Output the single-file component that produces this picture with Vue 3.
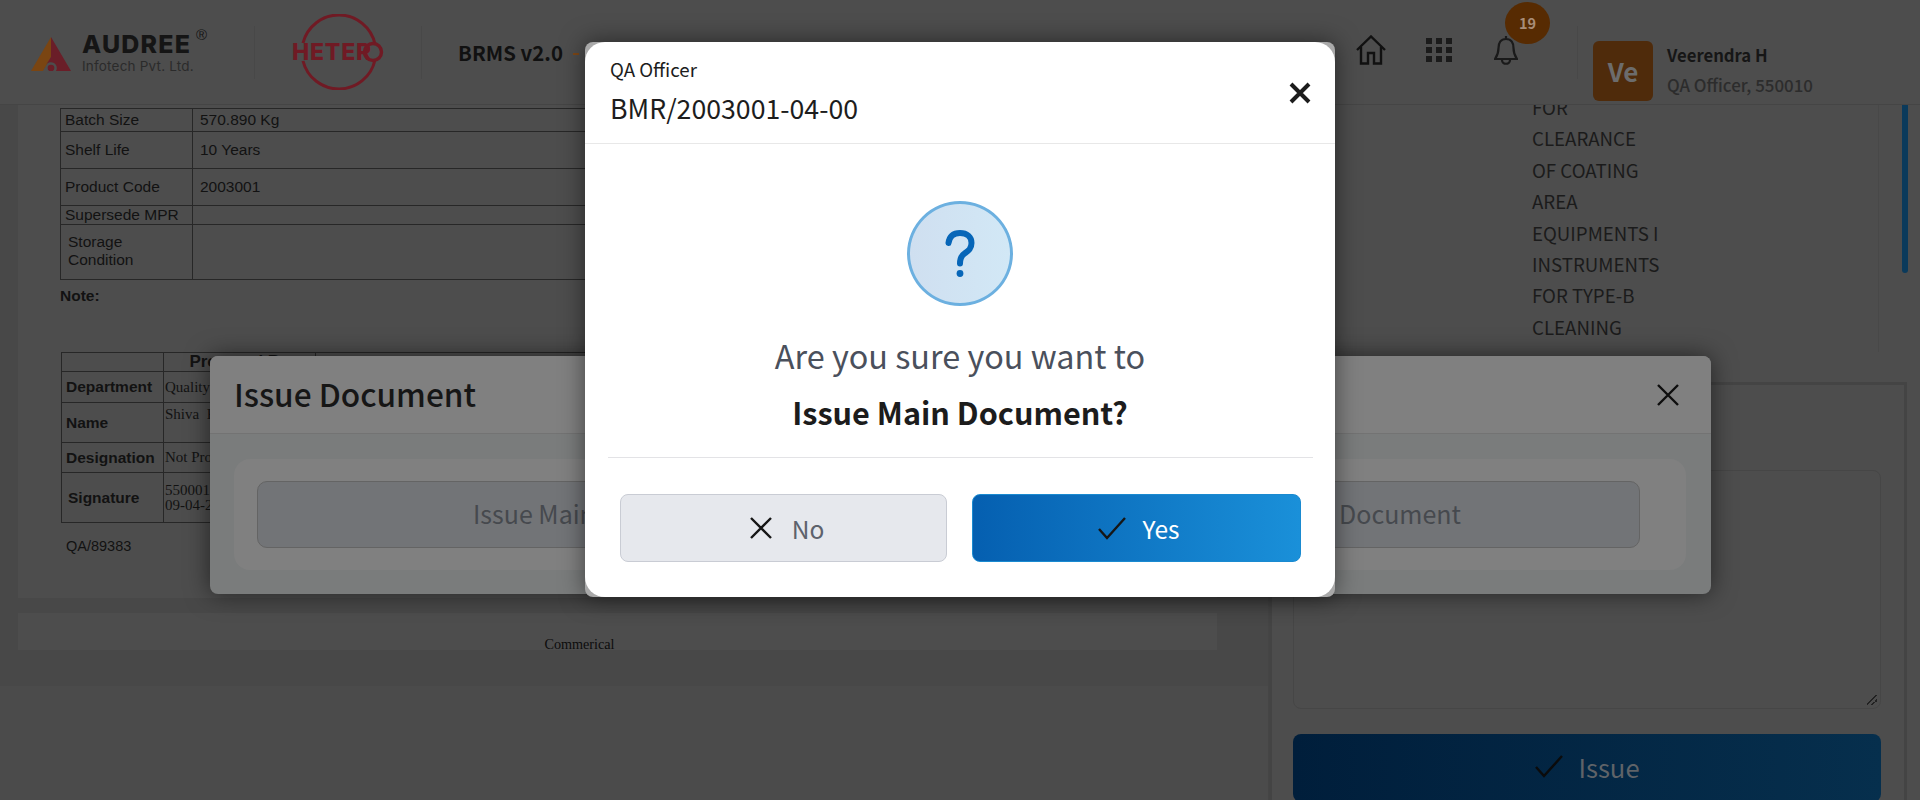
<template>
  <div class="screen">
    <header class="topbar">
      <div class="brand">
        <svg class="audree-mark" width="40" height="34" viewBox="0 0 40 34">
          <path d="M20 0 L0 34 H12 L20 20 Z" fill="#7a4512" />
          <path d="M20 0 L40 34 H25 A5 5 0 0 0 15 28 L20 20 Z" fill="#6a1e28" />
          <circle cx="20" cy="31" r="3.3" fill="#6a1e28" />
        </svg>
        <div class="audree-text">
          <div class="audree-name">AUDREE<span class="reg">®</span></div>
          <div class="audree-sub">Infotech Pvt. Ltd.</div>
        </div>
      </div>
      <div class="hetero">
        <svg class="hetero-ring" width="90" height="76" viewBox="0 0 90 76">
          <path d="M9 29 A37 37 0 0 1 81 30 M81 46 A37 37 0 0 1 9 47" fill="none" stroke="#701a24" stroke-width="3" />
          <circle cx="79" cy="38" r="8.5" fill="none" stroke="#701a24" stroke-width="3.4" />
        </svg>
        <span class="hetero-name">HETER</span>
      </div>
      <div class="product"><span>BRMS v2.0</span><i class="dash"></i></div>
      <nav class="tools">
        <svg width="30" height="30" viewBox="0 0 30 30" fill="none" stroke="#111" stroke-width="2.4" stroke-linejoin="miter">
          <path d="M1 15 L15 1.5 L29 15" />
          <path d="M5 12 V28.5 H12 V18 H18 V28.5 H25 V12" />
        </svg>
        <div class="dots"><i v-for="n in 9" :key="n"></i></div>
        <div class="bell">
          <svg width="24" height="30" viewBox="0 0 24 30" fill="none" stroke="#1a1a1a" stroke-width="2.2">
            <path d="M12 1 V4 M12 4 C6.5 4 4.5 8 4.5 13 C4.5 19 3 21 1 24 H23 C21 21 19.5 19 19.5 13 C19.5 8 17.5 4 12 4 Z" />
            <path d="M8 25 C8 30 16 30 16 25" />
          </svg>
          <span class="badge">19</span>
        </div>
      </nav>
      <div class="profile">
        <div class="avatar">Ve</div>
        <div>
          <div class="profile-name">Veerendra H</div>
          <div class="profile-role">QA Officer, 550010</div>
        </div>
      </div>
    </header>

    <main class="workspace">
      <section class="doc">
        <div class="sheet">
          <table class="spec">
            <colgroup><col class="spec-label"><col></colgroup>
            <tr v-for="row in specRows" :key="row.label" :style="{ height: row.h + 'px' }">
              <td>{{ row.label }}</td>
              <td>{{ row.value }}</td>
            </tr>
            <tr class="storage">
              <td><div>Storage<br>Condition</div></td>
              <td></td>
            </tr>
          </table>
          <div class="note">Note:</div>
          <table class="signoff">
            <colgroup><col class="sign-label"><col class="sign-col"><col></colgroup>
            <tr style="height: 19px"><th></th><th>Prepared By</th><th></th></tr>
            <tr style="height: 31px"><td class="head">Department</td><td class="val">Quality Assurance</td><td></td></tr>
            <tr style="height: 40px"><td class="head">Name</td><td class="val top">Shiva&nbsp; Kumar</td><td></td></tr>
            <tr style="height: 30px"><td class="head">Designation</td><td class="val">Not Provided</td><td></td></tr>
            <tr style="height: 50px"><td class="head sign">Signature</td><td class="val">550001<br>09-04-2024</td><td></td></tr>
          </table>
          <div class="doc-code">QA/89383</div>
        </div>
        <div class="sheet-foot"><span>Commerical</span></div>
      </section>

      <aside class="side">
        <div class="steps">
          <div class="step-text">
            <div class="clipped">FOR</div>
            <div v-for="line in stepLines" :key="line">{{ line }}</div>
          </div>
          <div class="scroll-thumb"></div>
        </div>
        <div class="panel">
          <div class="remarks"><span class="grip"></span></div>
          <div class="issue-btn">
            <svg width="30" height="24" viewBox="0 0 30 24" fill="none" stroke="#0b0b0b" stroke-width="2.4"><path d="M2 13 L10 22 L28 2" /></svg>
            <span>Issue</span>
          </div>
        </div>
      </aside>
    </main>

    <div class="issue-dialog">
      <div class="issue-head">
        <span>Issue Document</span>
        <svg width="24" height="24" viewBox="0 0 24 24" stroke="#0d0d0d" stroke-width="2.4"><path d="M2 2 L22 22 M22 2 L2 22" /></svg>
      </div>
      <div class="issue-body">
        <div class="issue-card">
          <div class="issue-option"><span>Issue Main</span><span>Document</span></div>
        </div>
      </div>
    </div>

    <div class="confirm">
      <div class="confirm-inner">
        <div class="confirm-head">
          <div>
            <div class="confirm-role">QA Officer</div>
            <div class="confirm-doc">BMR/2003001-04-00</div>
          </div>
          <svg width="22" height="22" viewBox="0 0 22 22" stroke="#1c1c1c" stroke-width="4"><path d="M2 2 L20 20 M20 2 L2 20" /></svg>
        </div>
        <div class="confirm-body">
          <div class="question">
            <svg width="30" height="48" viewBox="0 0 30 48" fill="none" stroke="#0766b8" stroke-width="6" stroke-linecap="round">
              <path d="M3.5 13 C4.5 6 9 3 15 3 C22 3 26.5 7 26.5 13 C26.5 19 23 21 19.5 23.5 C16.5 25.5 15 28 15 33.5" />
              <circle cx="15" cy="43.5" r="3.4" fill="#0766b8" stroke="none" />
            </svg>
          </div>
          <p class="ask">Are you sure you want to</p>
          <p class="ask-strong">Issue Main Document?</p>
          <div class="rule"></div>
          <div class="actions">
            <button class="btn btn-no">
              <svg width="24" height="24" viewBox="0 0 24 24" stroke="#161616" stroke-width="2.4"><path d="M2 2 L22 22 M22 2 L2 22" /></svg>
              <span>No</span>
            </button>
            <button class="btn btn-yes">
              <svg width="30" height="24" viewBox="0 0 30 24" fill="none" stroke="#161616" stroke-width="2.4"><path d="M2 13 L10 22 L28 2" /></svg>
              <span>Yes</span>
            </button>
          </div>
        </div>
      </div>
    </div>
  </div>
</template>

<script setup>
const specRows = [
  { label: 'Batch Size', value: '570.890 Kg', h: 23 },
  { label: 'Shelf Life', value: '10 Years', h: 37 },
  { label: 'Product Code', value: '2003001', h: 37 },
  { label: 'Supersede MPR', value: '', h: 18 }
]

const stepLines = [
  'CLEARANCE',
  'OF COATING',
  'AREA',
  'EQUIPMENTS I',
  'INSTRUMENTS',
  'FOR TYPE-B',
  'CLEANING'
]
</script>

<style>
body {
  margin: 0;
  background: #4b4b4b;
}
</style>

<style scoped>
.screen {
  position: relative;
  width: 1920px;
  height: 800px;
  overflow: hidden;
  background: #4b4b4b;
  font-family: "Noto Sans CJK JP", "Noto Sans", sans-serif;
  color: #1a1a1a;
}

/* top bar */
.topbar {
  height: 105px;
  box-sizing: border-box;
  display: flex;
  align-items: center;
  background: #4d4d4d;
  border-bottom: 1px solid #454545;
}
.brand {
  width: 255px;
  height: 53px;
  box-sizing: border-box;
  padding-left: 31px;
  display: flex;
  align-items: center;
  gap: 11px;
  border-right: 1px solid #484848;
}
.audree-mark {
  margin-top: 3px;
}
.audree-name {
  position: relative;
  font-family: "Inter", sans-serif;
  font-weight: 800;
  font-size: 25px;
  line-height: 28px;
  letter-spacing: 1.2px;
  color: #151515;
}
.reg {
  position: absolute;
  left: 114px;
  top: -9px;
  font-family: "Liberation Sans", sans-serif;
  font-weight: 400;
  font-size: 15px;
  letter-spacing: 0;
}
.audree-sub {
  font-family: "Inter", sans-serif;
  font-size: 13.5px;
  line-height: 16px;
  letter-spacing: 0.2px;
  color: #2b2b2b;
}
.hetero {
  position: relative;
  width: 166px;
  height: 53px;
  border-right: 1px solid #484848;
}
.hetero-ring {
  position: absolute;
  left: 39px;
  top: -12px;
}
.hetero-name {
  position: absolute;
  left: 37px;
  top: 12px;
  font-family: "Inter", sans-serif;
  font-weight: 800;
  font-size: 23px;
  letter-spacing: 0.8px;
  color: #701a24;
}
.product {
  margin-left: 36px;
  display: flex;
  align-items: center;
  font-weight: 600;
  font-size: 20.4px;
  color: #111;
}
.dash {
  width: 6px;
  height: 2px;
  margin-left: 10px;
  margin-top: 4px;
  background: #7d4716;
}
.tools {
  margin-left: auto;
  width: 222px;
  height: 53px;
  box-sizing: border-box;
  display: flex;
  align-items: center;
  border-right: 1px solid #484848;
}
.tools > svg {
  margin-top: -5px;
}
.dots {
  margin-left: 40px;
  margin-top: -5px;
  width: 26px;
  height: 24px;
  display: grid;
  grid-template-columns: repeat(3, 6px);
  grid-template-rows: repeat(3, 6px);
  justify-content: space-between;
  align-content: space-between;
}
.dots i {
  background: #1b1b1b;
}
.bell {
  position: relative;
  margin-left: 42px;
  margin-top: -5px;
  height: 30px;
}
.badge {
  position: absolute;
  left: 11px;
  top: -33px;
  width: 45px;
  height: 42px;
  border-radius: 50%;
  background: #572b02;
  color: #a88d78;
  font-weight: 700;
  font-size: 14.5px;
  display: flex;
  align-items: center;
  justify-content: center;
}
.profile {
  width: 342px;
  box-sizing: border-box;
  padding-left: 15px;
  display: flex;
  align-items: center;
  gap: 14px;
  margin-top: 37px;
}
.avatar {
  width: 60px;
  height: 60px;
  border-radius: 6px;
  background: #4f2b0b;
  color: #6c6c6c;
  font-weight: 700;
  font-size: 26px;
  display: flex;
  align-items: center;
  justify-content: center;
}
.profile-name {
  font-weight: 600;
  font-size: 16.7px;
  line-height: 30px;
  color: #161616;
  margin-top: -1px;
}
.profile-role {
  font-weight: 500;
  font-size: 16.9px;
  line-height: 30px;
  color: #2c2c2c;
}

/* document area */
.workspace {
  height: 695px;
  display: flex;
}
.doc {
  width: 1268px;
  height: 581px;
  box-sizing: border-box;
  padding: 0 51px 0 18px;
  background: #484848;
  overflow: hidden;
  font-family: "Liberation Sans", sans-serif;
  color: #121212;
}
.sheet {
  height: 493px;
  box-sizing: border-box;
  padding: 3px 0 0 42px;
  background: #4d4d4d;
}
.spec,
.signoff {
  border-collapse: collapse;
  table-layout: fixed;
  width: 600px;
  font-size: 15.5px;
}
.spec td,
.signoff td,
.signoff th {
  border: 1px solid #272727;
  padding: 0 0 0 4px;
}
.spec td:last-child {
  padding-left: 7px;
}
.spec-label {
  width: 132px;
}
.storage {
  height: 55px;
}
.storage div {
  padding-left: 3px;
  line-height: 18px;
  margin-top: -2px;
}
.note {
  margin-top: 7px;
  font-weight: 700;
  font-size: 15.5px;
  line-height: 18px;
}
.signoff {
  margin: 47px 0 0 1px;
}
.sign-label {
  width: 102px;
}
.sign-col {
  width: 152px;
}
.signoff th {
  font-size: 17px;
  line-height: 18px;
  text-align: center;
  padding: 0;
}
.head {
  font-weight: 700;
}
.head.sign {
  padding-left: 6px;
}
.signoff .val {
  padding-left: 1px;
  font-family: "Liberation Serif", serif;
  font-size: 15px;
  line-height: 15px;
}
.signoff .val.top {
  vertical-align: top;
  padding-top: 4px;
}
.doc-code {
  margin: 15px 0 0 6px;
  font-size: 14.5px;
}
.sheet-foot {
  height: 37px;
  margin-top: 15px;
  background: #4d4d4d;
  overflow: hidden;
  text-align: center;
  font-family: "Liberation Serif", serif;
  font-size: 14.2px;
  padding-top: 23px;
  box-sizing: border-box;
  color: #0c0c0c;
}
.sheet-foot span {
  margin-left: -76px;
}

/* right column */
.side {
  flex: 1;
  background: #4d4d4d;
  border-left: 1px solid #454545;
}
.steps {
  position: relative;
  height: 277px;
  overflow: hidden;
}
.step-text {
  width: 610px;
  height: 261px;
  box-sizing: border-box;
  padding-left: 263px;
  border-right: 1px solid #484848;
  font-size: 18.7px;
  line-height: 31.4px;
  color: #1b1b1b;
}
.clipped {
  margin-top: -14px;
}
.scroll-thumb {
  position: absolute;
  left: 633px;
  top: 0;
  width: 6px;
  height: 168px;
  border-radius: 0 0 3px 3px;
  background: #0b3a5b;
}
.panel {
  height: 418px;
  box-sizing: border-box;
  margin-right: 13px;
  border: 3px solid #444;
  border-bottom: 0;
  padding: 85px 23px 0 21px;
}
.remarks {
  position: relative;
  height: 239px;
  box-sizing: border-box;
  border: 1px solid #464646;
  border-radius: 8px;
}
.grip {
  position: absolute;
  right: 3px;
  bottom: 3px;
  width: 10px;
  height: 10px;
  background: linear-gradient(135deg, transparent 44%, #222 44%, #222 54%, transparent 54%, transparent 70%, #222 70%, #222 80%, transparent 80%);
}
.issue-btn {
  height: 68px;
  margin-top: 25px;
  box-sizing: border-box;
  padding-bottom: 4px;
  border-radius: 8px;
  background: linear-gradient(90deg, #001e3b, #062f4d);
  display: flex;
  align-items: center;
  justify-content: center;
  gap: 14px;
  font-size: 25.6px;
  color: #5f6368;
}

/* dialog behind */
.issue-dialog {
  position: absolute;
  left: 210px;
  top: 356px;
  width: 1501px;
  height: 238px;
  border-radius: 8px;
  background: #7a7c7c;
  box-shadow: 0 0 24px rgba(0, 0, 0, 0.55);
  overflow: hidden;
}
.issue-head {
  height: 78px;
  box-sizing: border-box;
  padding: 0 31px 0 24px;
  display: flex;
  align-items: center;
  justify-content: space-between;
  background: #808080;
  border-bottom: 1px solid #737373;
  font-weight: 500;
  font-size: 31.6px;
  color: #161616;
}
.issue-head span {
  margin-top: -3px;
}
.issue-body {
  padding: 25px 25px 0 24px;
}
.issue-card {
  height: 111px;
  box-sizing: border-box;
  padding: 22px 46px 0 23px;
  border-radius: 16px;
  background: #808080;
}
.issue-option {
  height: 67px;
  box-sizing: border-box;
  padding: 0 178px 4px 215px;
  display: flex;
  align-items: center;
  justify-content: space-between;
  border: 1px solid #646464;
  border-radius: 10px;
  background: #727477;
  font-size: 25px;
  color: #46494e;
}

/* confirm dialog */
.confirm {
  position: absolute;
  left: 585px;
  top: 42px;
  width: 750px;
  height: 555px;
  border-radius: 8px;
  background: #a9a9a9;
  box-shadow: 0 0 24px rgba(0, 0, 0, 0.5);
}
.confirm-inner {
  height: 100%;
  border-radius: 20px;
  background: #fff;
  overflow: hidden;
}
.confirm-head {
  height: 102px;
  box-sizing: border-box;
  padding: 0 24px 0 25px;
  display: flex;
  align-items: center;
  justify-content: space-between;
  border-bottom: 1px solid #e8e8e8;
}
.confirm-role {
  font-size: 18.7px;
  line-height: 28px;
  color: #1d1d1d;
}
.confirm-doc {
  font-size: 26.7px;
  line-height: 40px;
  margin-top: 5px;
  margin-bottom: 2px;
  color: #1d1d1d;
}
.confirm-body {
  display: flex;
  flex-direction: column;
  align-items: center;
}
.question {
  width: 106px;
  height: 105px;
  margin-top: 57px;
  box-sizing: border-box;
  border: 3px solid #6cb0e0;
  border-radius: 50%;
  background: linear-gradient(90deg, #cfdff0, #d2e8f6);
  display: flex;
  align-items: center;
  justify-content: center;
}
.ask {
  margin: 27px 0 0;
  font-size: 32.4px;
  line-height: 44px;
  color: #4a505c;
}
.ask-strong {
  margin: 13px 0 0;
  font-weight: 600;
  font-size: 30.6px;
  line-height: 44px;
  color: #1c1c1c;
}
.rule {
  width: 705px;
  height: 1px;
  margin-top: 23px;
  background: #e3e3e6;
}
.actions {
  display: flex;
  gap: 25px;
  margin-top: 36px;
}
.btn {
  width: 327px;
  height: 68px;
  box-sizing: border-box;
  display: flex;
  align-items: center;
  justify-content: center;
  gap: 16px;
  border-radius: 8px;
  font-family: inherit;
  font-size: 24.5px;
}
.btn-no {
  padding: 0 0 0 7px;
  gap: 19px;
  border: 1px solid #c9ccd4;
  background: #e6e8ed;
  color: #5d626c;
}
.btn-yes {
  width: 329px;
  padding: 0 0 0 4px;
  border: 1px solid #1a8ad0;
  background: linear-gradient(90deg, #055fb0, #1a90d9);
  color: #fff;
}
</style>
